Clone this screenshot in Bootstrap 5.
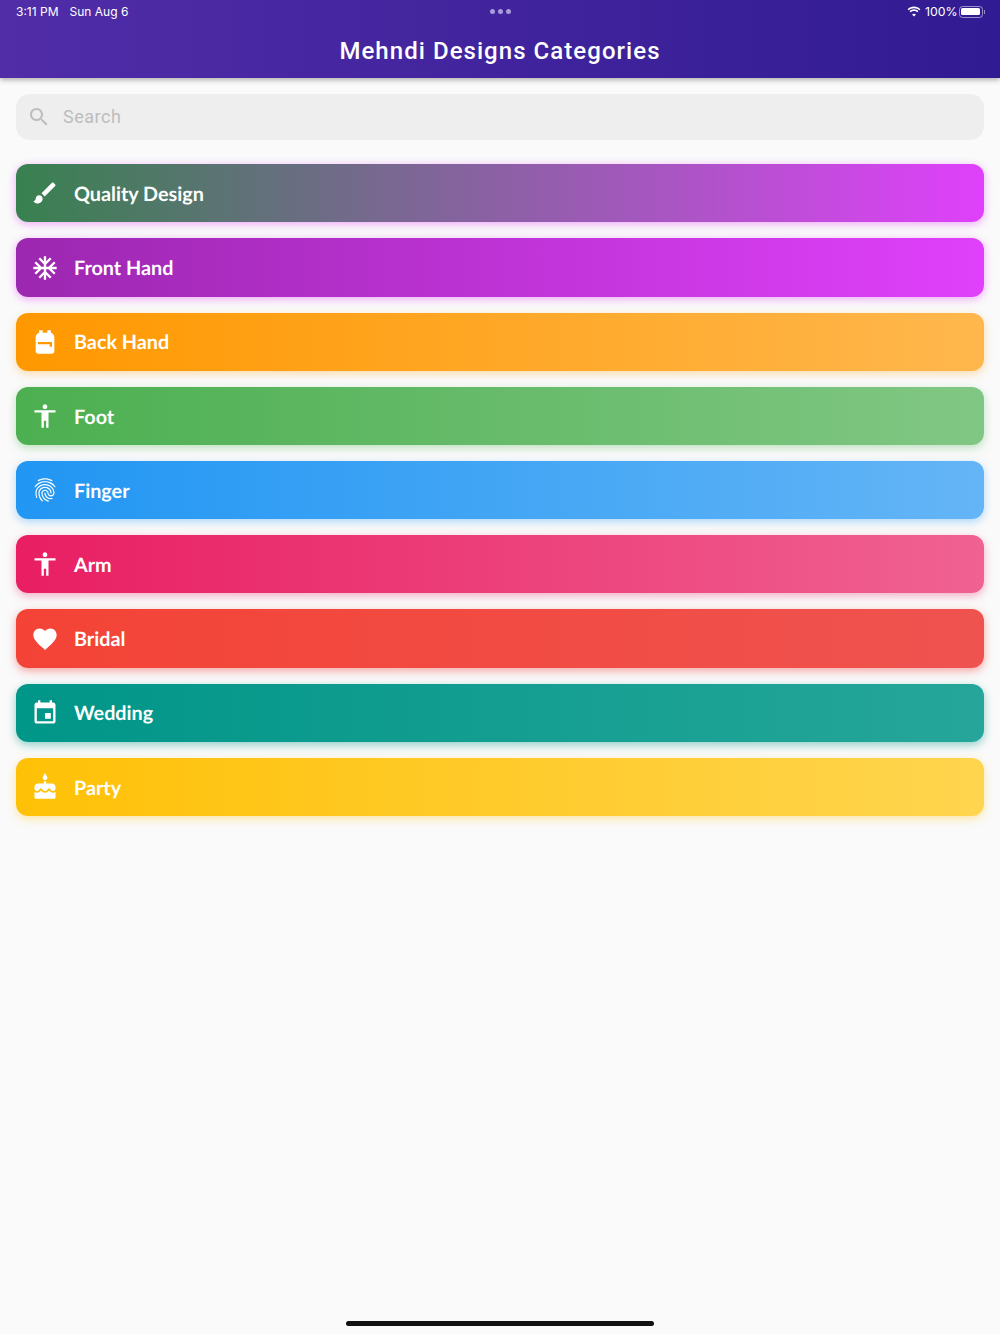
<!DOCTYPE html>
<html lang="en">
<head>
    <meta charset="UTF-8">
    <meta name="viewport" content="width=device-width, initial-scale=1.0">
    <title>Mehndi Designs Categories</title>
    <link rel="stylesheet" href="https://cdn.jsdelivr.net/npm/bootstrap@5.3.2/dist/css/bootstrap.min.css">
    <style>
        body { background: #fafafa; font-family: "Lato", "Liberation Sans", sans-serif; }
        .app-header { height: 78px; background: linear-gradient(90deg, #512da8, #311b92); box-shadow: 0 2px 5px rgba(0, 0, 0, .3); }
        .status-bar { height: 24px; padding: 0 16px 1px; color: #fff; font: 12px "Inter", "Liberation Sans", sans-serif; }
        .status-left { flex: 1 1 0; gap: 11px; }
        .status-right { flex: 1 1 0; gap: 4px; font-size: 12.3px; }
        .multi-dots { gap: 3px; }
        .multi-dots span { width: 5px; height: 5px; border-radius: 50%; background: #a99bdc; }
        .batt { width: 24px; height: 12px; padding: 1.5px; border: 1px solid rgba(255, 255, 255, .5); border-radius: 3.5px; margin: 0 -3px 0 -3px; }
        .batt span { display: block; height: 100%; background: #fff; border-radius: 1.5px; }
        .batt-tip { width: 1.5px; height: 4px; margin-right: -1px; background: rgba(255, 255, 255, .5); }
        .app-title { height: 54px; color: #fff; font: 500 24px "Roboto", "Liberation Sans", sans-serif; letter-spacing: 1.05px; }
        .page-body { padding: 16px; }
        .search-box { height: 46.3px; padding: 0 11px 0 11px; gap: 12px; background: #eee; border-radius: 14px; margin-bottom: 24px; color: #bdbdbd; font: 18px "Roboto", "Liberation Sans", sans-serif; letter-spacing: .5px; }
        .search-box svg { width: 24px; height: 24px; fill: #bdbdbd; }
        .search-box span { padding-bottom: 2px; }
        .cat-list { gap: 16px; }
        .cat-item { height: 58.2px; padding: 0 15px; gap: 15px; border-radius: 12px; color: #fff; font-size: 19.8px; font-weight: 700; text-rendering: geometricPrecision; }
        .cat-item span { padding-top: 3px; }
        .cat-item svg { width: 28px; height: 28px; fill: #fff; flex: none; }
        .cat-quality { background: linear-gradient(90deg, #38814f, #e040fb); box-shadow: 0 2px 8px rgba(224, 64, 251, .45); }
        .cat-front { background: linear-gradient(90deg, #9c27b0, #e040fb); box-shadow: 0 2px 8px rgba(224, 64, 251, .45); }
        .cat-back { background: linear-gradient(90deg, #ff9800, #ffb74d); box-shadow: 0 3px 8px rgba(255, 183, 77, .45); }
        .cat-foot { background: linear-gradient(90deg, #4caf50, #81c784); box-shadow: 0 3px 8px rgba(129, 199, 132, .5); }
        .cat-finger { background: linear-gradient(90deg, #2196f3, #64b5f6); box-shadow: 0 3px 8px rgba(100, 181, 246, .5); }
        .cat-arm { background: linear-gradient(90deg, #e91e63, #f06292); box-shadow: 0 3px 8px rgba(240, 98, 146, .5); }
        .cat-bridal { background: linear-gradient(90deg, #f44336, #ef5350); box-shadow: 0 3px 8px rgba(239, 83, 80, .5); }
        .cat-wedding { background: linear-gradient(90deg, #009688, #26a69a); box-shadow: 0 3px 8px rgba(38, 166, 154, .5); }
        .cat-party { background: linear-gradient(90deg, #ffc107, #ffd54f); box-shadow: 0 3px 8px rgba(255, 213, 79, .5); }
        .home-bar { width: 308px; height: 5px; margin-bottom: 8px; background: #111; border-radius: 3px; }
    </style>
</head>
<body class="d-flex flex-column vh-100 overflow-hidden">
    <!-- Header -->
    <header class="app-header">
        <div class="status-bar d-flex align-items-center">
            <div class="status-left d-flex"><span>3:11 PM</span><span>Sun Aug 6</span></div>
            <div class="multi-dots d-flex"><span></span><span></span><span></span></div>
            <div class="status-right d-flex align-items-center justify-content-end">
                <svg width="14" height="11" viewBox="0 0 16 12" fill="#fff"><path d="M8 2.200c2.400 0 4.500.9 6.100 2.400l1.200-1.300C13.400 1.400 10.800.2 8 .2S2.600 1.400.7 3.300l1.200 1.300C3.500 3.100 5.600 2.200 8 2.200z"/><path d="M8 5.400c1.500 0 2.800.6 3.800 1.500l1.200-1.300C11.700 4.300 9.900 3.500 8 3.500s-3.700.8-5 2.100l1.200 1.300c1-.9 2.300-1.500 3.800-1.500z"/><path d="M8 8.500c-.9 0-1.600.3-2.200.9L8 11.800l2.200-2.400c-.6-.6-1.300-.9-2.200-.9z"/></svg>
                <span>100%</span>
                <div class="batt"><span></span></div>
                <div class="batt-tip"></div>
            </div>
        </div>
        <div class="app-title d-flex align-items-center justify-content-center">Mehndi Designs Categories</div>
    </header>

    <main class="page-body flex-grow-1">
        <div class="search-box d-flex align-items-center">
            <svg viewBox="0 0 24 24"><path d="M15.5 14h-.79l-.28-.27C15.41 12.59 16 11.11 16 9.500 16 5.910 13.090 3 9.500 3S3 5.910 3 9.500 5.910 16 9.500 16c1.610 0 3.090-.59 4.230-1.570l.27.28v.79l5 4.990L20.490 19l-4.990-5zm-6 0C7.010 14 5 11.990 5 9.500S7.010 5 9.500 5 14 7.010 14 9.500 11.990 14 9.500 14z"/></svg>
            <span>Search</span>
        </div>

        <!-- Categorias -->
        <div class="cat-list d-flex flex-column">
            <div class="cat-item cat-quality d-flex align-items-center">
                <svg viewBox="0 0 24 24"><path d="M7 14c-1.660 0-3 1.340-3 3 0 1.310-1.160 2-2 2 .92 1.220 2.490 2 4 2 2.210 0 4-1.790 4-4 0-1.660-1.340-3-3-3zm13.710-9.370l-1.340-1.340c-.39-.39-1.020-.39-1.410 0L9 12.250 11.750 15l8.960-8.960c.39-.39.39-1.020 0-1.410z"/></svg>
                <span>Quality Design</span>
            </div>
            <div class="cat-item cat-front d-flex align-items-center">
                <svg viewBox="0 0 24 24"><path d="M22 11h-4.170l3.240-3.240-1.410-1.420L15 11h-2V9l4.660-4.660-1.420-1.410L13 6.170V2h-2v4.170L7.760 2.930 6.340 4.340 11 9v2H9L4.340 6.340 2.930 7.760 6.170 11H2v2h4.170l-3.240 3.240 1.410 1.420L9 13h2v2l-4.660 4.660 1.420 1.410L11 17.830V22h2v-4.170l3.240 3.240 1.420-1.410L13 15v-2h2l4.660 4.660 1.410-1.420L17.830 13H22z"/></svg>
                <span>Front Hand</span>
            </div>
            <div class="cat-item cat-back d-flex align-items-center">
                <svg viewBox="0 0 24 24"><path d="M20 8v12c0 1.100-.9 2-2 2H6c-1.100 0-2-.9-2-2V8c0-1.860 1.280-3.410 3-3.860V2h3v2h4V2h3v2.140C18.720 4.590 20 6.140 20 8zM6 12v2h10v2h2v-4H6z"/></svg>
                <span>Back Hand</span>
            </div>
            <div class="cat-item cat-foot d-flex align-items-center">
                <svg viewBox="0 0 24 24"><path d="M12 2c1.100 0 2 .9 2 2s-.9 2-2 2-2-.9-2-2 .9-2 2-2zm9 7h-6v13h-2v-6h-2v6H9V9H3V7h18v2z"/></svg>
                <span>Foot</span>
            </div>
            <div class="cat-item cat-finger d-flex align-items-center">
                <svg viewBox="0 0 24 24"><path d="M17.810 4.470c-.08 0-.16-.02-.23-.06C15.660 3.420 14 3 12.010 3c-1.980 0-3.860.47-5.570 1.410-.24.13-.54.04-.68-.2-.13-.24-.04-.55.2-.68C7.820 2.520 9.860 2 12.010 2c2.130 0 3.990.47 6.030 1.520.25.13.34.43.21.67-.09.18-.26.28-.44.28zM3.500 9.720c-.1 0-.2-.03-.29-.09-.23-.16-.28-.47-.12-.7.99-1.400 2.250-2.500 3.750-3.270C9.980 4.040 14 4.030 17.150 5.650c1.500.77 2.760 1.860 3.750 3.250.16.22.11.54-.12.7-.23.16-.54.11-.7-.12-.9-1.260-2.040-2.250-3.390-2.940-2.870-1.470-6.540-1.470-9.400.01-1.360.7-2.500 1.700-3.400 2.960-.08.14-.23.21-.39.21zm6.250 12.070c-.13 0-.26-.05-.35-.15-.87-.87-1.340-1.430-2.010-2.640-.69-1.230-1.050-2.730-1.050-4.340 0-2.970 2.540-5.390 5.660-5.390s5.660 2.420 5.660 5.390c0 .28-.22.5-.5.5s-.5-.22-.5-.5c0-2.420-2.090-4.390-4.660-4.390s-4.660 1.970-4.660 4.390c0 1.440.32 2.770.93 3.850.64 1.150 1.080 1.640 1.850 2.420.19.2.19.51 0 .71-.11.1-.24.15-.37.15zm7.170-1.850c-1.190 0-2.240-.3-3.100-.89-1.490-1.010-2.380-2.650-2.380-4.390 0-.28.22-.5.5-.5s.5.22.5.5c0 1.410.72 2.740 1.940 3.560.71.48 1.540.71 2.540.71.24 0 .64-.03 1.040-.1.27-.05.53.13.58.41.05.27-.13.53-.41.58-.57.11-1.070.12-1.210.12zM14.910 22c-.04 0-.09-.01-.13-.02-1.590-.44-2.630-1.030-3.720-2.100-1.400-1.390-2.170-3.240-2.170-5.220 0-1.620 1.380-2.940 3.080-2.940s3.080 1.320 3.080 2.940c0 1.070.93 1.940 2.080 1.940s2.080-.87 2.080-1.940c0-3.770-3.250-6.830-7.250-6.830-2.840 0-5.440 1.580-6.610 4.030-.39.81-.59 1.760-.59 2.800 0 .78.07 2.010.67 3.610.1.26-.03.55-.29.64-.26.1-.55-.04-.64-.29-.49-1.310-.73-2.610-.73-3.960 0-1.200.23-2.290.68-3.240 1.330-2.790 4.280-4.600 7.510-4.600 4.550 0 8.250 3.510 8.250 7.830 0 1.620-1.380 2.940-3.080 2.940s-3.080-1.320-3.080-2.940c0-1.070-.93-1.940-2.080-1.940s-2.080.87-2.080 1.940c0 1.710.66 3.310 1.870 4.510.95.94 1.860 1.460 3.270 1.850.27.07.42.35.35.61-.05.23-.26.38-.47.38z"/></svg>
                <span>Finger</span>
            </div>
            <div class="cat-item cat-arm d-flex align-items-center">
                <svg viewBox="0 0 24 24"><path d="M12 2c1.100 0 2 .9 2 2s-.9 2-2 2-2-.9-2-2 .9-2 2-2zm9 7h-6v13h-2v-6h-2v6H9V9H3V7h18v2z"/></svg>
                <span>Arm</span>
            </div>
            <div class="cat-item cat-bridal d-flex align-items-center">
                <svg viewBox="0 0 24 24"><path d="M12 21.350l-1.450-1.320C5.400 15.360 2 12.280 2 8.500 2 5.420 4.420 3 7.500 3c1.740 0 3.410.81 4.500 2.090C13.090 3.810 14.760 3 16.500 3 19.580 3 22 5.420 22 8.500c0 3.780-3.400 6.860-8.550 11.540L12 21.350z"/></svg>
                <span>Bridal</span>
            </div>
            <div class="cat-item cat-wedding d-flex align-items-center">
                <svg viewBox="0 0 24 24"><path d="M17 12h-5v5h5v-5zM16 1v2H8V1H6v2H5c-1.110 0-1.990.9-1.990 2L3 19c0 1.100.89 2 2 2h14c1.100 0 2-.9 2-2V5c0-1.100-.9-2-2-2h-1V1h-2zm3 18H5V8h14v11z"/></svg>
                <span>Wedding</span>
            </div>
            <div class="cat-item cat-party d-flex align-items-center">
                <svg viewBox="0 0 24 24"><path d="M12 6c1.110 0 2-.9 2-2 0-.38-.1-.73-.29-1.030L12 0l-1.710 2.970c-.19.3-.29.65-.29 1.030 0 1.100.9 2 2 2zm4.600 9.990l-1.070-1.070-1.080 1.070c-1.300 1.300-3.580 1.310-4.890 0l-1.070-1.070-1.090 1.070C6.750 16.640 5.880 17 4.960 17c-.73 0-1.400-.23-1.960-.61V21c0 .55.45 1 1 1h16c.55 0 1-.45 1-1v-4.610c-.56.38-1.230.61-1.960.61-.92 0-1.790-.36-2.440-1.010zM18 9h-5V7h-2v2H6c-1.660 0-3 1.340-3 3v1.540c0 1.080.88 1.960 1.960 1.960.52 0 1.020-.2 1.380-.57l2.140-2.130 2.130 2.130c.74.74 2.030.74 2.770 0l2.140-2.130 2.130 2.130c.37.37.86.57 1.380.57 1.080 0 1.960-.88 1.960-1.960V12C21 10.340 19.660 9 18 9z"/></svg>
                <span>Party</span>
            </div>
        </div>
    </main>

    <div class="home-bar mx-auto"></div>

    <script src="https://cdn.jsdelivr.net/npm/bootstrap@5.3.2/dist/js/bootstrap.bundle.min.js"></script>
</body>
</html>
